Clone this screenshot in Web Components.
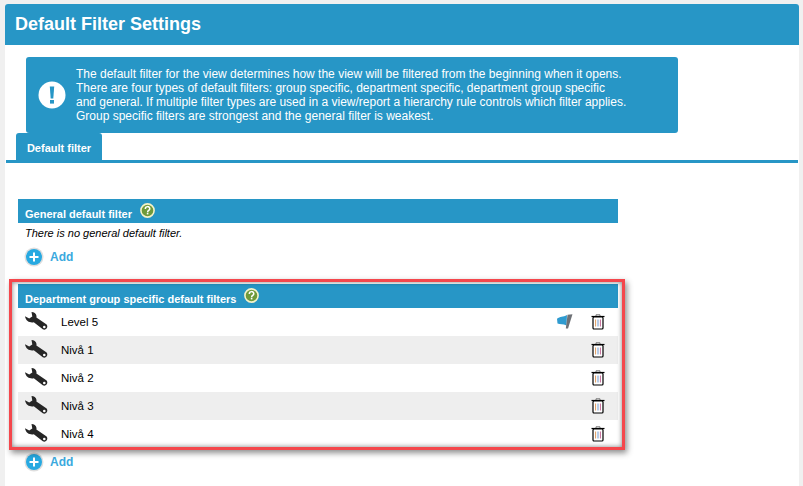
<!DOCTYPE html>
<html>
<head>
<meta charset="utf-8">
<style>
  html, body { margin: 0; padding: 0; background: #f0f0f0; overflow: hidden; }
  body { height: 486px; font-family: "Liberation Sans", Arial, sans-serif; font-size: 12px; color: #000; }
</style>
</head>
<body>
<filter-page heading="Default Filter Settings">
  <info-box>The default filter for the view determines how the view will be filtered from the beginning when it opens.<br>There are four types of default filters: group specific, department specific, department group specific<br>and general. If multiple filter types are used in a view/report a hierarchy rule controls which filter applies.<br>Group specific filters are strongest and the general filter is weakest.</info-box>
  <tab-bar label="Default filter"></tab-bar>

  <filter-section heading="General default filter" style="margin-top:36px">
    <div style="font-style:italic;font-size:11px;line-height:20px;padding-left:7px">There is no general default filter.</div>
  </filter-section>
  <add-link style="margin-top:3px"></add-link>

  <mark-box style="margin-top:11px">
    <filter-section heading="Department group specific default filters">
      <filter-row label="Level 5" flag></filter-row>
      <filter-row label="Nivå 1" shaded></filter-row>
      <filter-row label="Nivå 2"></filter-row>
      <filter-row label="Nivå 3" shaded></filter-row>
      <filter-row label="Nivå 4"></filter-row>
    </filter-section>
  </mark-box>
  <add-link style="margin-top:1px"></add-link>
</filter-page>

<script>
// small helper, every element just sets its shadow html once
function shadow(el, html) {
  el.attachShadow({ mode: 'open' }).innerHTML = html;
}

class FilterPage extends HTMLElement {
  connectedCallback() {
    shadow(this, `
      <style>
        :host { display: block; margin: 4px 4px 0 5px; background: #fff; height: 482px; border-radius: 3px 3px 0 0; overflow: hidden; }
        .head { height: 41px; box-sizing: border-box; background: #2796c6; color: #fff; font-size: 18px; font-weight: 700; line-height: 40px; padding-left: 10px; }
      </style>
      <div class="head">${this.getAttribute('heading')}</div>
      <slot></slot>
    `);
  }
}

class InfoBox extends HTMLElement {
  connectedCallback() {
    shadow(this, `
      <style>
        :host { display: flex; align-items: center; width: 652px; height: 76px; box-sizing: border-box; margin: 12px 0 0 21px; background: #2796c6; border-radius: 3px; color: #fff; font-size: 12px; line-height: 14px; }
        svg { flex: none; margin: 0 10px 0 12px; }
        div { white-space: nowrap; }
      </style>
      <svg width="28" height="28" viewBox="0 0 28 28">
        <circle cx="14" cy="14" r="13.5" fill="#fff"/>
        <path d="M11.800 5.500h4.400l-.9 12h-2.600z" fill="#2796c6"/>
        <rect x="12" y="19" width="4" height="3.600" fill="#2796c6"/>
      </svg>
      <div><slot></slot></div>
    `);
  }
}

class TabBar extends HTMLElement {
  connectedCallback() {
    shadow(this, `
      <style>
        :host { display: block; margin-left: 1px; border-bottom: 3px solid #2796c6; margin-right: 1px; height: 27px; }
        div { margin-left: 10px; width: 86px; height: 27px; background: #2796c6; color: #fff; font-size: 11px; font-weight: 700; line-height: 30px; text-align: center; border-radius: 3px 3px 0 0; }
      </style>
      <div>${this.getAttribute('label')}</div>
    `);
  }
}

class FilterSection extends HTMLElement {
  connectedCallback() {
    shadow(this, `
      <style>
        :host { display: block; width: 600px; margin-left: 13px; }
        .bar { display: flex; align-items: center; height: 24px; background: #2796c6; color: #fff; font-size: 11px; font-weight: 700; padding-left: 7px; }
        .bar span { padding-top: 6px; }
        svg { margin: 0 0 0 8px; position: relative; top: -1px; }
      </style>
      <div class="bar">
        <span>${this.getAttribute('heading')}</span>
        <svg width="15" height="15" viewBox="0 0 15 15">
          <circle cx="7.500" cy="7.500" r="6.600" fill="#6f9a3a" stroke="#f4f2c8" stroke-width="1.600"/>
          <path d="M5.300 5.900c0-3 4.500-3 4.500-.2 0 1.800-2.200 1.700-2.200 3.500" fill="none" stroke="#fff" stroke-width="1.500"/>
          <rect x="6.800" y="9.800" width="1.600" height="1.600" fill="#fff"/>
        </svg>
      </div>
      <slot></slot>
    `);
  }
}

class FilterRow extends HTMLElement {
  connectedCallback() {
    const flag = this.hasAttribute('flag') ? `
      <svg class="flag" width="16" height="16" viewBox="0 0 16 16">
        <path d="M0 4.800C3 2 6 3.500 10 1L9.500 11.500C6 9.800 3 10.500.5 9.500z" fill="#2f9bd0"/>
        <path d="M10.500.8 15.500.2 11 14.500H8.800z" fill="#6e7176"/>
      </svg>` : '';
    shadow(this, `
      <style>
        :host { display: flex; align-items: center; height: 28px; background: ${this.hasAttribute('shaded') ? '#eeeeee' : '#fff'}; font-size: 11.500px; position: relative; }
        .wrench { margin-left: 7px; flex: none; }
        .name { margin-left: 12px; flex: 1; }
        .flag { margin-right: 18px; flex: none; }
        .bin { margin-right: 13px; flex: none; }
      </style>
      <svg class="wrench" width="24" height="20" viewBox="0 0 24 20">
        <path d="M6.500 0C9 0 11.200 1.500 11.500 4c0 .5 0 1-.1 1.500l9.900 6.800c2.700 2.200 -.4 6.900-3.500 5L8.800 10.200C5.500 11 .8 9.500 0 4.200L4.200 6.600 7.300 4.500z" fill="#262626"/>
        <circle cx="19.300" cy="15" r="1.300" fill="#fff"/>
      </svg>
      <span class="name">${this.getAttribute('label')}</span>
      ${flag}
      <svg class="bin" width="14" height="16" viewBox="0 0 14 16">
        <path d="M5 2V.8h4V2" fill="none" stroke="#777" stroke-width="1"/>
        <path d="M.5 2.500h13" stroke="#000" stroke-width="1.200"/>
        <rect x="2" y="3" width="10" height="12" rx="1" fill="#fff" stroke="#000" stroke-width="1.200"/>
        <path d="M4.600 5.500v7" stroke="#e09a5c" stroke-width="1"/>
        <path d="M7 5.500v7" stroke="#6f9ad0" stroke-width="1"/>
        <path d="M9.400 5.500v7" stroke="#c46a98" stroke-width="1"/>
      </svg>
    `);
  }
}

class AddLink extends HTMLElement {
  connectedCallback() {
    shadow(this, `
      <style>
        :host { display: flex; align-items: center; gap: 6px; height: 22px; margin-left: 19px; color: #3ba9de; font-size: 12px; font-weight: 700; }
        svg { flex: none; }
      </style>
      <svg width="20" height="20" viewBox="0 0 20 20">
        <circle cx="10" cy="10" r="9.500" fill="#dedede"/>
        <circle cx="10" cy="10" r="8" fill="#27a9e1"/>
        <path d="M10 5.500v9M5.500 10h9" stroke="#fff" stroke-width="2"/>
      </svg>
      <span>Add</span>
    `);
  }
}

// red annotation frame round a block, ::after lays the soft inner shadow over the content
class MarkBox extends HTMLElement {
  connectedCallback() {
    shadow(this, `
      <style>
        :host { display: block; position: relative; box-sizing: border-box; width: 616px; height: 171px; margin-left: 4px; border: 3px solid #f4474c; padding-top: 2px; overflow: hidden; box-shadow: 2px 3px 6px rgba(0,0,0,.45); }
        :host::after { content: ""; position: absolute; inset: 0; box-shadow: inset 0 0 5px rgba(0,0,0,.5); pointer-events: none; }
        ::slotted(*) { margin-left: 6px !important; }
      </style>
      <slot></slot>
    `);
  }
}

customElements.define('filter-page', FilterPage);
customElements.define('info-box', InfoBox);
customElements.define('tab-bar', TabBar);
customElements.define('filter-section', FilterSection);
customElements.define('filter-row', FilterRow);
customElements.define('add-link', AddLink);
customElements.define('mark-box', MarkBox);
</script>
</body>
</html>
